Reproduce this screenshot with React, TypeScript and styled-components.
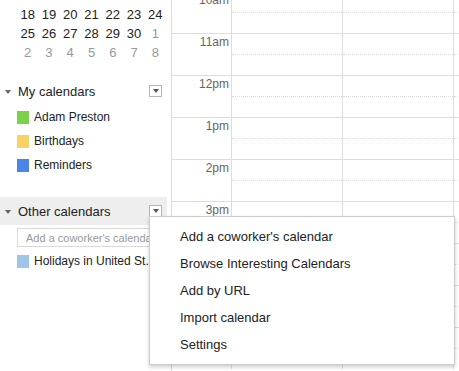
import styled, { createGlobalStyle } from 'styled-components'

const GlobalStyle = createGlobalStyle`
  html, body {
    margin: 0;
    padding: 0;
    background: #fff;
    overflow: hidden;
  }
  body {
    font-family: "Liberation Sans", Arial, sans-serif;
    color: #222;
  }
`

const weeks = [
  [
    { d: 18 }, { d: 19 }, { d: 20 }, { d: 21 }, { d: 22 }, { d: 23 }, { d: 24 },
  ],
  [
    { d: 25 }, { d: 26 }, { d: 27 }, { d: 28 }, { d: 29 }, { d: 30 }, { d: 1, other: true },
  ],
  [
    { d: 2, other: true }, { d: 3, other: true }, { d: 4, other: true }, { d: 5, other: true },
    { d: 6, other: true }, { d: 7, other: true }, { d: 8, other: true },
  ],
]

const myCalendars = [
  { name: 'Adam Preston', color: '#7bd148' },
  { name: 'Birthdays', color: '#fad165' },
  { name: 'Reminders', color: '#4986e7' },
]

const hours = ['10am', '11am', '12pm', '1pm', '2pm', '3pm', '4pm', '5pm', '6pm']

const menuItems = [
  "Add a coworker's calendar",
  'Browse Interesting Calendars',
  'Add by URL',
  'Import calendar',
  'Settings',
]

export default function App() {
  return (
    <>
      <GlobalStyle />
      <Page>
        <Sidebar>
          <MiniCal>
            {weeks.map((week, i) =>
              week.map((day, j) => (
                <Day key={`${i}-${j}`} $other={!!day.other}>
                  {day.d}
                </Day>
              ))
            )}
          </MiniCal>

          <SectionHeader>
            <Caret />
            <HeaderLabel>My calendars</HeaderLabel>
            <DropButton>
              <DropArrow />
            </DropButton>
          </SectionHeader>
          {myCalendars.map((c) => (
            <CalItem key={c.name}>
              <Swatch $color={c.color} />
              <CalName>{c.name}</CalName>
            </CalItem>
          ))}

          <SectionHeader $active>
            <Caret />
            <HeaderLabel>Other calendars</HeaderLabel>
            <DropButton>
              <DropArrow />
            </DropButton>
          </SectionHeader>
          <CoworkerInput placeholder="Add a coworker's calendar" />
          <CalItem>
            <Swatch $color="#9fc6e7" />
            <CalName>Holidays in United St...</CalName>
          </CalItem>
        </Sidebar>

        <Grid>
          <GridInner>
            <Gutter>
              {hours.map((h) => (
                <GutterCell key={h}>{h}</GutterCell>
              ))}
            </Gutter>
            {[0, 1, 2].map((col) => (
              <DayColumn key={col}>
                {hours.map((h) => (
                  <HourCell key={h} />
                ))}
              </DayColumn>
            ))}
          </GridInner>
        </Grid>

        <Menu>
          {menuItems.map((m) => (
            <MenuItem key={m}>{m}</MenuItem>
          ))}
        </Menu>
      </Page>
    </>
  )
}

const Page = styled.div`
  position: relative;
  display: flex;
  width: 459px;
  height: 371px;
  overflow: hidden;
`

const Sidebar = styled.aside`
  width: 167px;
  flex-shrink: 0;
  margin-right: 4px;
  padding-top: 5px;
  font-size: 12px;
`

const MiniCal = styled.div`
  display: grid;
  grid-template-columns: repeat(7, 1fr);
  grid-auto-rows: 19px;
  width: 149px;
  margin-left: 17px;
  margin-bottom: 15px;
`

const Day = styled.div<{ $other: boolean }>`
  display: flex;
  align-items: center;
  justify-content: center;
  font-size: 13px;
  color: ${(p) => (p.$other ? '#999' : '#222')};
`

const SectionHeader = styled.div<{ $active?: boolean }>`
  display: flex;
  align-items: center;
  height: 28px;
  background: ${(p) => (p.$active ? '#eee' : 'transparent')};
  margin-top: ${(p) => (p.$active ? '20px' : '0')};
`

const Caret = styled.span`
  width: 0;
  height: 0;
  margin: 1px 7px 0 5px;
  border-left: 3px solid transparent;
  border-right: 3px solid transparent;
  border-top: 4px solid #666;
`

const HeaderLabel = styled.span`
  flex: 1;
  font-size: 13px;
  color: #222;
`

const DropButton = styled.span`
  display: flex;
  align-items: center;
  justify-content: center;
  box-sizing: border-box;
  width: 13px;
  height: 12px;
  margin-right: 5px;
  background: #fff;
  border: 1px solid #b4b4b4;
`

const DropArrow = styled.span`
  width: 0;
  height: 0;
  border-left: 3px solid transparent;
  border-right: 3px solid transparent;
  border-top: 4px solid #555;
`

const CalItem = styled.div`
  display: flex;
  align-items: center;
  height: 24px;
  padding-left: 17px;
`

const Swatch = styled.span<{ $color: string }>`
  width: 12px;
  height: 13px;
  margin-right: 5px;
  background: ${(p) => p.$color};
`

const CalName = styled.span`
  font-size: 12px;
  color: #222;
  white-space: nowrap;
`

const CoworkerInput = styled.input`
  display: block;
  box-sizing: border-box;
  width: 150px;
  height: 19px;
  margin: 3px 0 2px 17px;
  padding: 0 0 0 8px;
  border: 1px solid #d9d9d9;
  font-family: "Liberation Sans", Arial, sans-serif;
  font-size: 11px;
  color: #222;
  outline: none;

  &::placeholder {
    color: #999;
  }
`

const Grid = styled.div`
  flex: 1;
  overflow: hidden;
  border-left: 1px solid #ddd;
`

const GridInner = styled.div`
  display: flex;
  margin-top: -9px;
`

const Gutter = styled.div`
  width: 59px;
  flex-shrink: 0;
`

const GutterCell = styled.div`
  box-sizing: border-box;
  height: 42px;
  border-top: 1px solid #ddd;
  padding: 1px 2px 0 0;
  text-align: right;
  font-size: 12px;
  color: #666;
`

const DayColumn = styled.div`
  width: 110px;
  flex-shrink: 0;
  border-left: 1px solid #ddd;
`

const HourCell = styled.div`
  box-sizing: border-box;
  height: 42px;
  border-top: 1px solid #ddd;
  padding-top: 20px;

  &::after {
    content: '';
    display: block;
    border-top: 1px dotted #ddd;
  }
`

const Menu = styled.ul`
  position: absolute;
  left: 149px;
  top: 216px;
  box-sizing: border-box;
  width: 306px;
  margin: 0;
  padding: 6px 0;
  list-style: none;
  background: #fff;
  border: 1px solid #ccc;
  box-shadow: 0 2px 4px rgba(0, 0, 0, 0.2);
`

const MenuItem = styled.li`
  display: flex;
  align-items: center;
  height: 27px;
  padding-left: 30px;
  font-size: 13px;
  color: #222;
`
